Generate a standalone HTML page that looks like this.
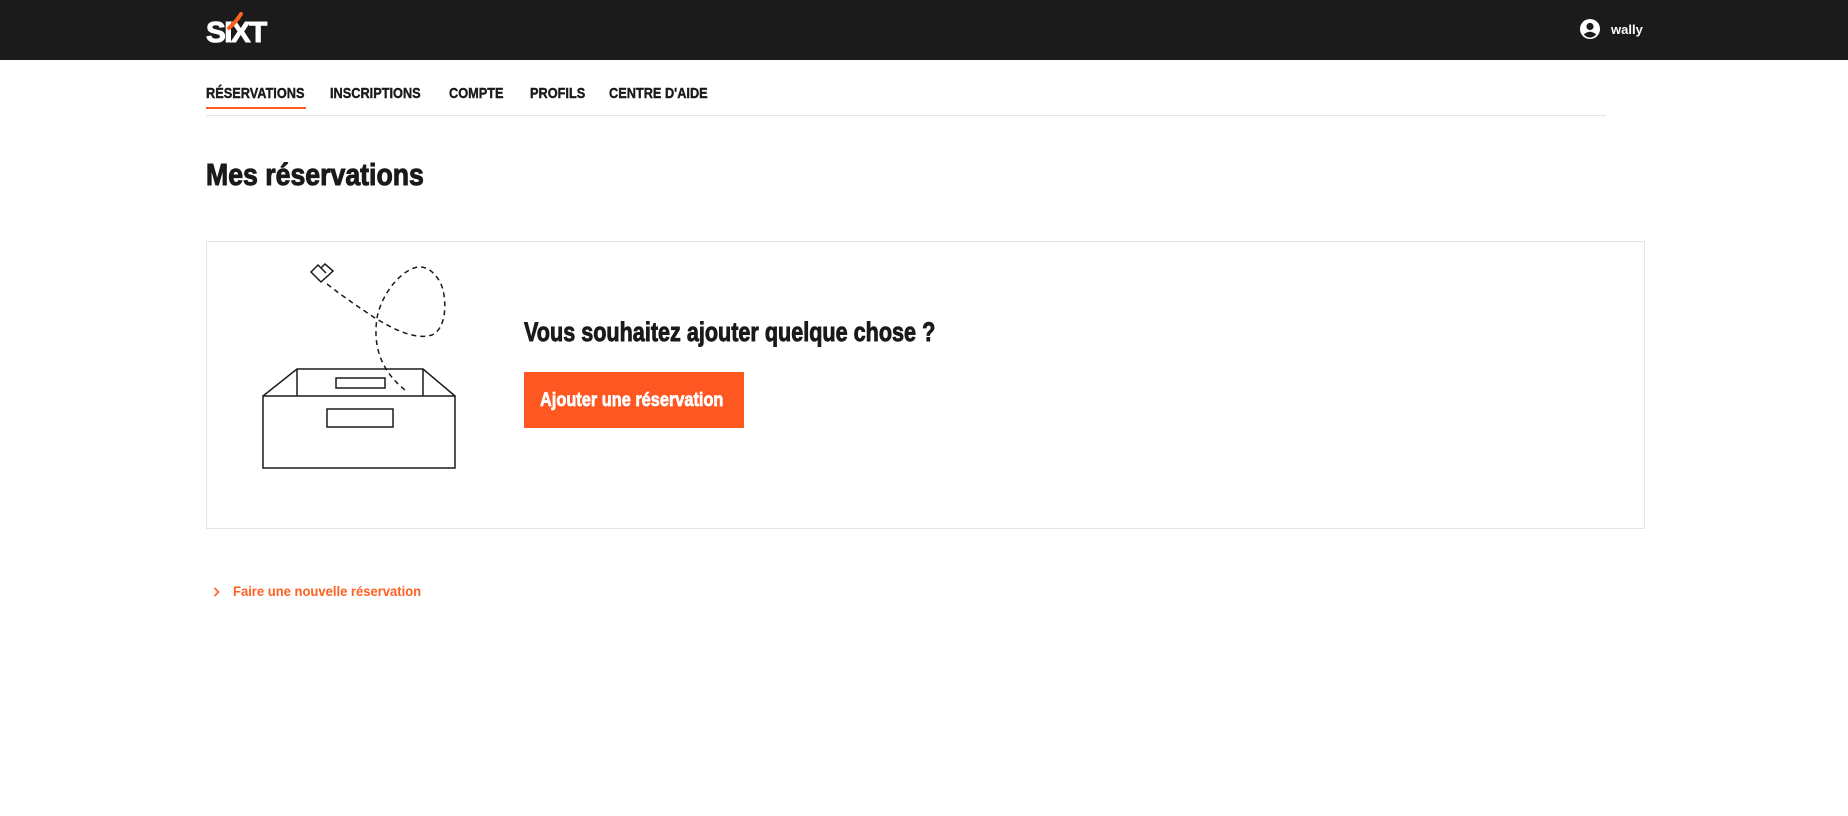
<!DOCTYPE html>
<html><head><meta charset="utf-8">
<style>
*{margin:0;padding:0;box-sizing:border-box}
html,body{width:1848px;height:816px;background:#fff;overflow:hidden;font-family:"Liberation Sans",Arial,sans-serif;font-weight:bold}
.a{position:absolute;white-space:nowrap;transform-origin:0 0;transform:scaleX(.85);line-height:1;-webkit-text-stroke:.6px currentColor}
#hdr{position:absolute;left:0;top:0;width:1848px;height:60px;background:#1b1b1b}
</style></head><body>
<div id="hdr"></div>
<!-- logo -->
<div class="a" style="left:206px;top:19px;font-size:29px;color:#fff;letter-spacing:-1.5px;transform:scaleX(1.02);-webkit-text-stroke:1px #fff">SIXT</div>
<svg style="position:absolute;left:221px;top:10px" width="30" height="22"><path d="M8 18 Q15 12 20 4" stroke="#ff5f1f" stroke-width="4" fill="none" stroke-linecap="round"/></svg>
<!-- user -->
<svg style="position:absolute;left:1580px;top:19px" width="20" height="20" viewBox="0 0 20 20"><circle cx="10" cy="10" r="10" fill="#fff"/><circle cx="10" cy="7.5" r="3.6" fill="#1b1b1b"/><path d="M3.8 15.5 Q10 10 16.2 15.5 Q13 18.6 10 18.6 Q7 18.6 3.8 15.5Z" fill="#1b1b1b"/></svg>
<div class="a" style="left:1611px;top:23px;font-size:13px;color:#fff;transform:none;-webkit-text-stroke:0">wally</div>
<!-- nav -->
<div class="a" style="left:206px;top:86px;font-size:15px;color:#1a1a1a;-webkit-text-stroke:.4px currentColor">RÉSERVATIONS</div>
<div class="a" style="left:330px;top:86px;font-size:15px;color:#1a1a1a;-webkit-text-stroke:.4px currentColor">INSCRIPTIONS</div>
<div class="a" style="left:449px;top:86px;font-size:15px;color:#1a1a1a;-webkit-text-stroke:.4px currentColor">COMPTE</div>
<div class="a" style="left:530px;top:86px;font-size:15px;color:#1a1a1a;-webkit-text-stroke:.4px currentColor">PROFILS</div>
<div class="a" style="left:609px;top:86px;font-size:15px;color:#1a1a1a;-webkit-text-stroke:.4px currentColor">CENTRE D'AIDE</div>
<div style="position:absolute;left:206px;top:107px;width:100px;height:2px;background:#ff5f1f"></div>
<div style="position:absolute;left:206px;top:115px;width:1400px;height:1px;background:#e6e6e6"></div>
<!-- title -->
<div class="a" style="left:206px;top:159px;font-size:31px;color:#1a1a1a;transform:scaleX(.86);-webkit-text-stroke:1px currentColor">Mes réservations</div>
<!-- card -->
<div style="position:absolute;left:206px;top:241px;width:1439px;height:288px;border:1px solid #e5e5e5"></div>
<svg style="position:absolute;left:0;top:0" width="500" height="500" fill="none" stroke="#1a1a1a" stroke-width="1.5">
<rect x="263" y="396" width="192" height="72"/>
<path d="M263 396 L297 369 L423 369 L455 396"/>
<path d="M297 369 L297 396 M423 369 L423 396"/>
<rect x="336" y="378" width="49" height="10"/>
<rect x="327" y="409" width="66" height="18"/>
<path d="M327 284 C345 298 360 308 375 318 C395 330 415 340 432 335 C448 328 447 295 440 282 C432 268 422 265 414 268 C395 275 380 300 377 318 C373 345 380 370 405 390" stroke-dasharray="5 4"/>
<path d="M311 272 L318 265 L321 268 L325 264 L333 271 L321 282 Z M318 265 L326 273 M321 268 L325 272"/>
</svg>
<div class="a" style="left:524px;top:319px;font-size:27px;color:#1a1a1a;transform:scaleX(.8);-webkit-text-stroke:.9px currentColor">Vous souhaitez ajouter quelque chose ?</div>
<div style="position:absolute;left:524px;top:372px;width:220px;height:56px;background:#ff5722"></div>
<div class="a" style="left:540px;top:391px;font-size:19px;color:#fff;transform:scaleX(.86);-webkit-text-stroke:.7px currentColor">Ajouter une réservation</div>
<!-- link -->
<svg style="position:absolute;left:211px;top:585px" width="12" height="14"><path d="M3.5 3 L7.5 7 L3.5 11" stroke="#ff5f1f" stroke-width="1.6" fill="none"/></svg>
<div class="a" style="left:233px;top:584px;font-size:14px;color:#ff5f1f;transform:scaleX(.93);-webkit-text-stroke:0">Faire une nouvelle réservation</div>
</body></html>
